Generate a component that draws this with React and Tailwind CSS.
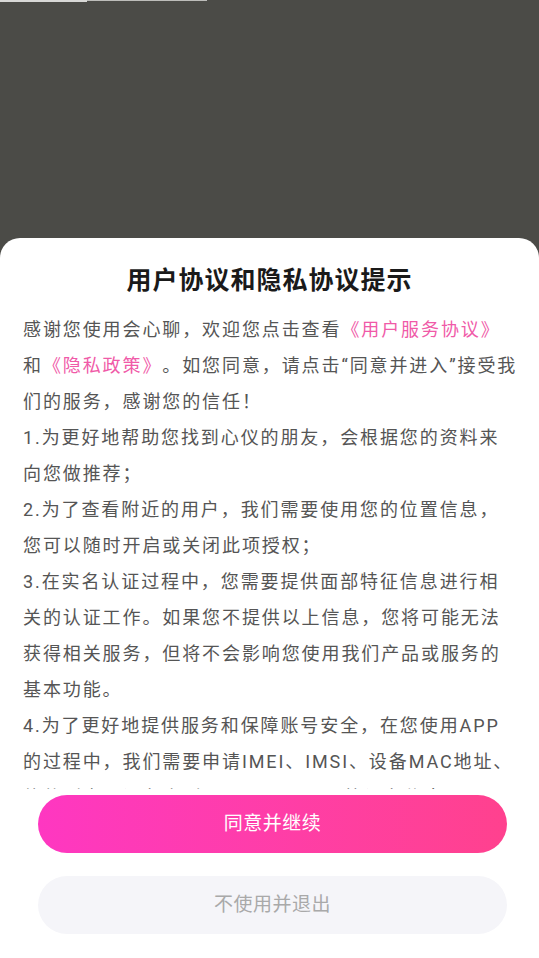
import React from 'react'

const LINK = 'text-[#f05aa8]'

// the reference breaks lines at fixed points, so each paragraph carries its own breaks
const ITEMS = [
  ['1.为更好地帮助您找到心仪的朋友，会根据您的资料来', '向您做推荐；'],
  ['2.为了查看附近的用户，我们需要使用您的位置信息，', '您可以随时开启或关闭此项授权；'],
  [
    '3.在实名认证过程中，您需要提供面部特征信息进行相',
    '关的认证工作。如果您不提供以上信息，您将可能无法',
    '获得相关服务，但将不会影响您使用我们产品或服务的',
    '基本功能。',
  ],
  [
    '4.为了更好地提供服务和保障账号安全，在您使用APP',
    '的过程中，我们需要申请IMEI、IMSI、设备MAC地址、',
    '软件列表、设备序列号、Android ID等设备信息。',
  ],
]

export default function App() {
  return (
    <div className="h-[958px] w-full flex flex-col bg-[#4b4b47] font-['Roboto','Noto_Sans_CJK_SC',sans-serif]">
      <div className="flex items-start h-[2px]">
        <div className="w-[87px] h-[2px] bg-[#d8d8d6]" />
        <div className="w-[120px] h-px bg-[#bdbdba]" />
      </div>
      <div className="flex-1" />

      <div className="h-[720px] bg-white rounded-t-[20px] flex flex-col">
        <h1 className="pt-[25px] text-center text-[25px] leading-[36px] tracking-[1px] font-bold text-[#1a1a1a]">
          用户协议和隐私协议提示
        </h1>

        <div className="mt-[13px] h-[477px] overflow-hidden pl-[23px] pr-[8px] text-[18px] leading-[36px] tracking-[1.9px] text-[#555555] [text-spacing-trim:space-all]">
          <p>
            感谢您使用会心聊，欢迎您点击查看<span className={LINK}>《用户服务协议》</span>
            <br />
            和<span className={LINK}>《隐私政策》</span>。如您同意，请点击“同意并进入”接受我
            <br />
            们的服务，感谢您的信任！
          </p>
          {ITEMS.map((lines, i) => (
            <p key={i}>
              {lines.map((line, j) => (
                <React.Fragment key={j}>
                  {j > 0 && <br />}
                  {line}
                </React.Fragment>
              ))}
            </p>
          ))}
        </div>

        <button className="mt-[6px] ml-[38px] w-[469px] h-[58px] rounded-full bg-gradient-to-r from-[#fe37c1] to-[#ff418e] text-white text-[19px] tracking-[0.5px]">
          同意并继续
        </button>
        <button className="mt-[23px] ml-[38px] w-[469px] h-[58px] rounded-full bg-[#f5f5f9] text-[#a9a9a9] text-[19px] tracking-[0.5px]">
          不使用并退出
        </button>
      </div>
    </div>
  )
}
